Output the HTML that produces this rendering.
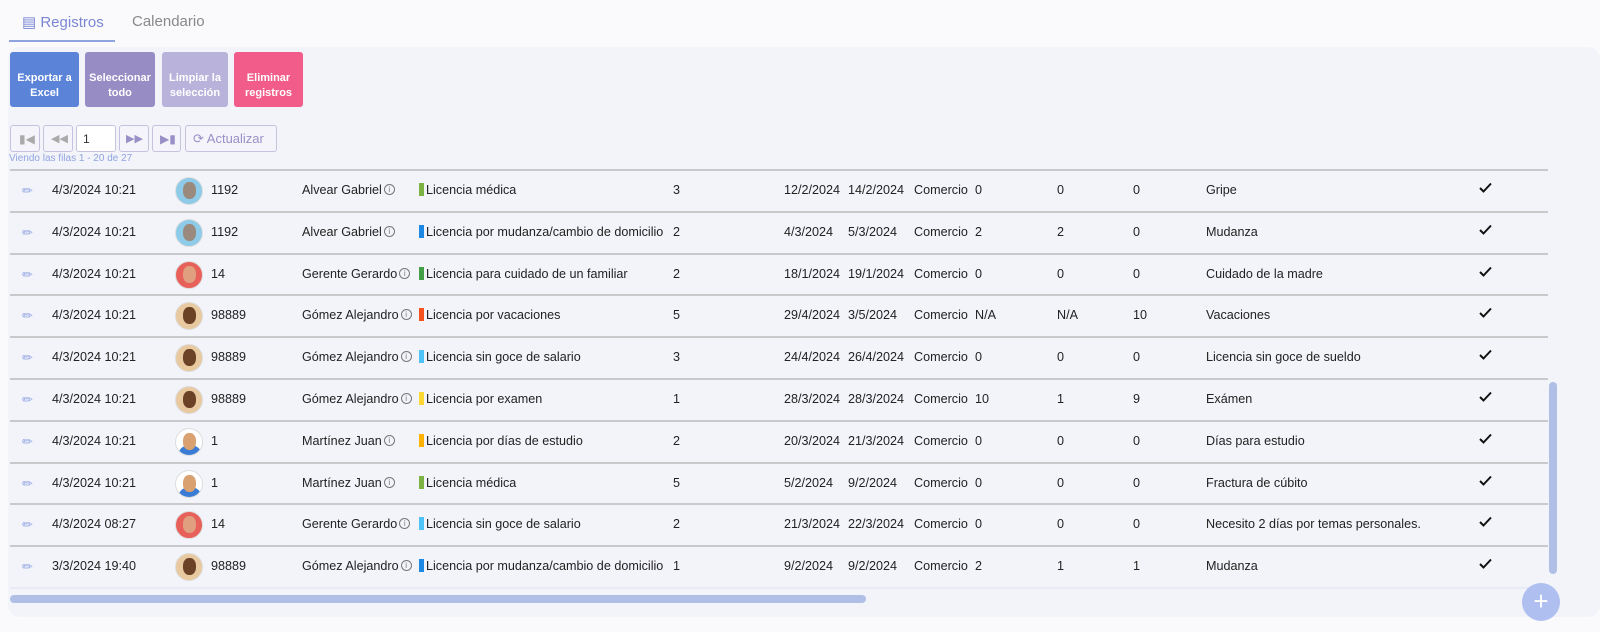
<!DOCTYPE html>
<html><head><meta charset="utf-8"><style>
*{margin:0;padding:0;box-sizing:border-box}
body{width:1600px;height:632px;background:#fafafd;font-family:"Liberation Sans",sans-serif;position:relative;overflow:hidden;color:#333}
.a{position:absolute;white-space:nowrap}
.tab{font-size:15px;color:#7a86d4}
.btn{position:absolute;top:52px;height:55px;border-radius:3px;color:#fff;font-size:11px;font-weight:bold;text-align:center;line-height:15px;padding-top:19px}
.pb{position:absolute;top:125px;height:27px;border:1px solid #c5c2de;border-radius:3px;background:#f4f4fa}
.row{position:absolute;left:10px;width:1538px;height:42px;border-top:2px solid #c9c9cc;font-size:12.6px;color:#222}
.row .a{top:12px}
.av{position:absolute;left:165px;top:6px;width:28px;height:28px;border-radius:50%;overflow:hidden;border:1px solid #ddd}
.bar{display:inline-block;width:5px;height:13px;vertical-align:-2px;margin-right:2px}
.info{display:inline-block;width:11px;height:11px;border:1px solid #777;border-radius:50%;font-size:8px;line-height:9px;text-align:center;color:#777;vertical-align:2px;margin-left:2px}
</style></head><body>
<div class="a tab" style="left:22px;top:13px">&#9636; Registros</div>
<div class="a" style="left:9px;top:40px;width:106px;height:2px;background:#8fa3e0"></div>
<div class="a tab" style="left:132px;top:13px;color:#888">Calendario</div>
<div class="a" style="left:8px;top:47px;width:1592px;height:570px;background:#f3f4fa;border-radius:12px"></div>
<div class="btn" style="left:10px;width:69px;background:#5b84d9">Exportar a<br>Excel</div>
<div class="btn" style="left:85px;width:70px;background:#978cc4">Seleccionar<br>todo</div>
<div class="btn" style="left:162px;width:66px;background:#b9b3db">Limpiar la<br>selección</div>
<div class="btn" style="left:234px;width:69px;background:#f25c8a">Eliminar<br>registros</div>
<div class="pb" style="left:10px;width:30px"><div class="a" style="left:8px;top:6px;color:#aaa;font-size:12px">&#9646;&#9664;</div></div>
<div class="pb" style="left:43px;width:30px"><div class="a" style="left:7px;top:6px;color:#aaa;font-size:11px">&#9664;&#9664;</div></div>
<div class="pb" style="left:76px;width:40px;background:#fff"><div class="a" style="left:6px;top:6px;font-size:12px">1</div></div>
<div class="pb" style="left:119px;width:30px"><div class="a" style="left:6px;top:6px;color:#9a90c8;font-size:11px">&#9654;&#9654;</div></div>
<div class="pb" style="left:152px;width:29px"><div class="a" style="left:7px;top:6px;color:#9a90c8;font-size:12px">&#9654;&#9646;</div></div>
<div class="pb" style="left:185px;width:92px"><div class="a" style="left:7px;top:5px;color:#9a90c8;font-size:13px">&#10227; Actualizar</div></div>
<div class="a" style="left:9px;top:153px;font-size:10px;color:#8fa3e0">Viendo las filas 1 - 20 de 27</div>

<div id="rows"></div>
<div class="a" style="left:10px;top:587px;width:1538px;height:2px;background:#e8eaf5"></div>
<div class="a" style="left:10px;top:595px;width:856px;height:8px;background:#b0bfe6;border-radius:4px"></div>
<div class="a" style="left:1549px;top:382px;width:8px;height:192px;background:#b0bfe6;border-radius:4px"></div>
<div class="a" style="left:1522px;top:583px;width:38px;height:38px;border-radius:50%;background:#aebff0;color:#fff;font-size:26px;text-align:center;line-height:36px">+</div>
<script>
var d=[
["4/3/2024 10:21",0,"1192","Alvear Gabriel","#7cb342","Licencia médica","3","12/2/2024","14/2/2024","0","0","0","Gripe"],
["4/3/2024 10:21",0,"1192","Alvear Gabriel","#1e88e5","Licencia por mudanza/cambio de domicilio","2","4/3/2024","5/3/2024","2","2","0","Mudanza"],
["4/3/2024 10:21",1,"14","Gerente Gerardo","#43a047","Licencia para cuidado de un familiar","2","18/1/2024","19/1/2024","0","0","0","Cuidado de la madre"],
["4/3/2024 10:21",2,"98889","Gómez Alejandro","#f4511e","Licencia por vacaciones","5","29/4/2024","3/5/2024","N/A","N/A","10","Vacaciones"],
["4/3/2024 10:21",2,"98889","Gómez Alejandro","#4fc3f7","Licencia sin goce de salario","3","24/4/2024","26/4/2024","0","0","0","Licencia sin goce de sueldo"],
["4/3/2024 10:21",2,"98889","Gómez Alejandro","#fdd835","Licencia por examen","1","28/3/2024","28/3/2024","10","1","9","Exámen"],
["4/3/2024 10:21",3,"1","Martínez Juan","#ffb300","Licencia por días de estudio","2","20/3/2024","21/3/2024","0","0","0","Días para estudio"],
["4/3/2024 10:21",3,"1","Martínez Juan","#7cb342","Licencia médica","5","5/2/2024","9/2/2024","0","0","0","Fractura de cúbito"],
["4/3/2024 08:27",1,"14","Gerente Gerardo","#4fc3f7","Licencia sin goce de salario","2","21/3/2024","22/3/2024","0","0","0","Necesito 2 días por temas personales."],
["3/3/2024 19:40",2,"98889","Gómez Alejandro","#1e88e5","Licencia por mudanza/cambio de domicilio","1","9/2/2024","9/2/2024","2","1","1","Mudanza"]];
var av=[["#8ecbe8","#9a8a7e"],["#e8605a","#e0a080"],["#e8c9a0","#6b4226"],["#fff","#d9a070"]];
var h="";
d.forEach(function(r,i){var t=169+i*41.8;var a=av[r[1]];
h+='<div class="row" style="top:'+t+'px">'+
'<div class="a" style="left:12px;color:#8fa3e0;font-size:13px">&#9999;</div>'+
'<div class="a" style="left:42px">'+r[0]+'</div>'+
'<div class="av" style="background:'+a[0]+'">'+(r[1]==3?'<div class="a" style="left:3px;top:16px;width:22px;height:16px;border-radius:50%;background:#3a7bd5"></div>':'')+'<div class="a" style="left:7px;top:4px;width:13px;height:17px;border-radius:45%;background:'+a[1]+'"></div></div>'+
'<div class="a" style="left:201px">'+r[2]+'</div>'+
'<div class="a" style="left:292px">'+r[3]+'<span class="info">i</span></div>'+
'<div class="a" style="left:409px"><span class="bar" style="background:'+r[4]+'"></span>'+r[5]+'</div>'+
'<div class="a" style="left:663px">'+r[6]+'</div>'+
'<div class="a" style="left:774px">'+r[7]+'</div>'+
'<div class="a" style="left:838px">'+r[8]+'</div>'+
'<div class="a" style="left:904px">Comercio</div>'+
'<div class="a" style="left:965px">'+r[9]+'</div>'+
'<div class="a" style="left:1047px">'+r[10]+'</div>'+
'<div class="a" style="left:1123px">'+r[11]+'</div>'+
'<div class="a" style="left:1196px">'+r[12]+'</div>'+
'<svg class="a" style="left:1469px;top:11px" width="13" height="11" viewBox="0 0 13 11"><path d="M1 6 L4.5 9.5 L12 1.5" stroke="#111" stroke-width="2" fill="none"/></svg></div>';});
document.getElementById("rows").innerHTML=h;
</script>
</body></html>
